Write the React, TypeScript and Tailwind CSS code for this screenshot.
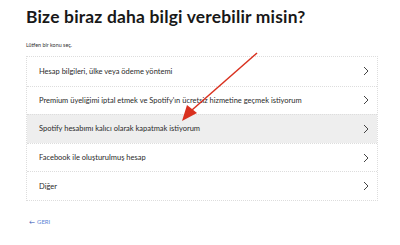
import React from "react";

const topics = [
  "Hesap bilgileri, ülke veya ödeme yöntemi",
  "Premium üyeliğimi iptal etmek ve Spotify'ın ücretsiz hizmetine geçmek istiyorum",
  "Spotify hesabımı kalıcı olarak kapatmak istiyorum",
  "Facebook ile oluşturulmuş hesap",
  "Diğer",
];

function Chevron() {
  return (
    <svg width="6" height="10" viewBox="0 0 6 10" className="shrink-0">
      <path d="M1 1 L5 5 L1 9" fill="none" stroke="#444" strokeWidth="1" />
    </svg>
  );
}

export default function App() {
  return (
    <div
      className="relative w-[400px] h-[245px] bg-white overflow-hidden"
      style={{ fontFamily: "Lato, 'Noto Sans', sans-serif" }}
    >
      <div className="pl-[26px] pr-[22px] pt-[4px]">
        <h1 className="text-[17.4px] leading-[26px] font-bold text-[#181818] tracking-[0.2px]">
          Bize biraz daha bilgi verebilir misin?
        </h1>
        <p className="mt-[10px] text-[5.4px] leading-[10px] text-[#333]">
          Lütfen bir konu seç.
        </p>
        <div className="mt-[6px] border border-dotted border-[#ddd]">
          {topics.map((t, i) => (
            <div
              key={t}
              className={`flex items-center justify-between h-[28.6px] pl-[12px] pr-[8px] ${
                i > 0 ? "border-t border-dotted border-[#ddd]" : ""
              } ${i === 2 ? "bg-[#eeeeee]" : ""}`}
            >
              <span className="text-[7.5px] text-[#2a2a2a]">{t}</span>
              <Chevron />
            </div>
          ))}
        </div>
        <div className="mt-[16px] pl-[3px] flex items-center gap-[2px] text-[6px] text-[#5b86d6]">
          <span className="text-[#2a4cb0]">←</span>
          <span>GERI</span>
        </div>
      </div>

      <svg
        className="absolute left-0 top-0 pointer-events-none"
        width="400"
        height="245"
        viewBox="0 0 400 245"
      >
        <line x1="257" y1="53" x2="192" y2="110" stroke="#d9301e" strokeWidth="1.5" />
        <polygon points="182,121 187,105 197,113" fill="#d9301e" />
      </svg>
    </div>
  );
}
